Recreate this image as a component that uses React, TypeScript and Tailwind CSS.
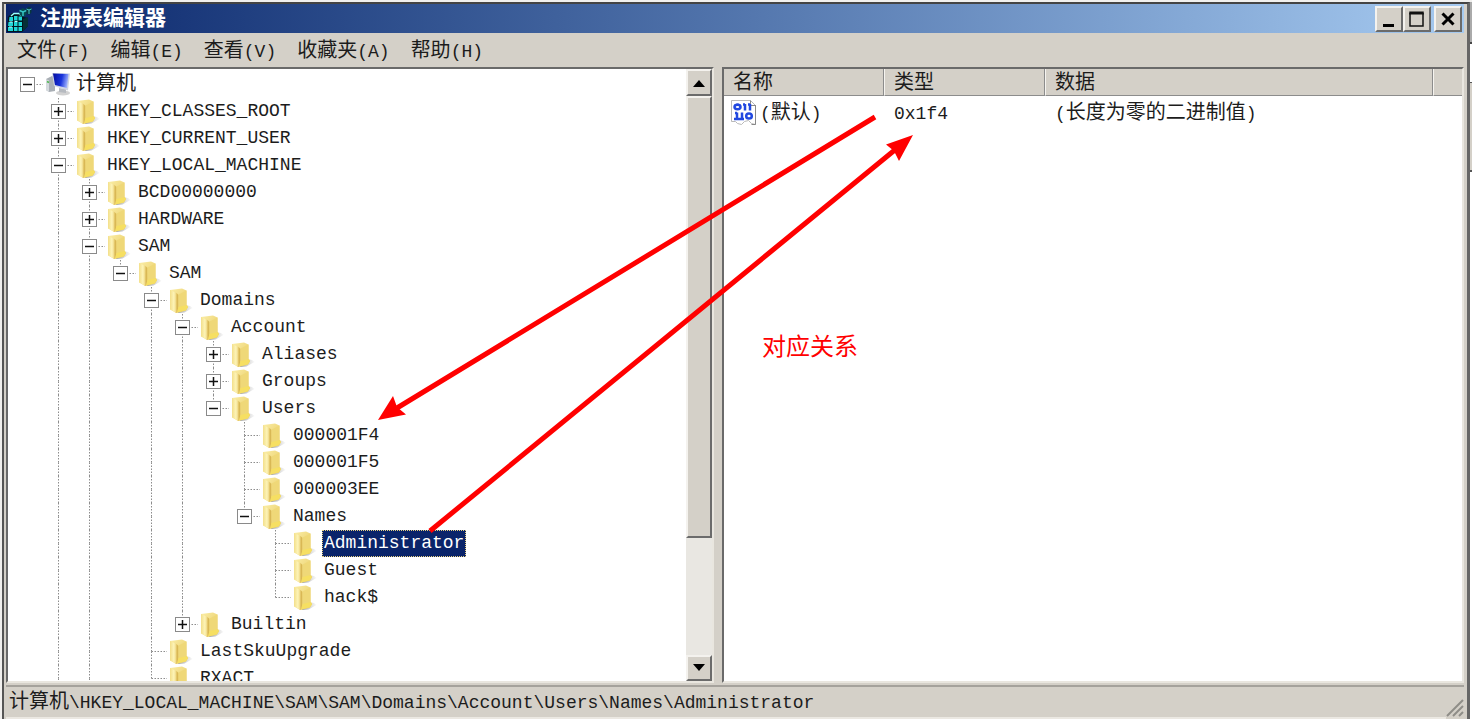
import { Fragment, useState } from "react";

/* `more` keeps the connector line running below the last loaded child. */
type Node = { id: string; label: string; closed?: boolean; more?: boolean; children?: Node[] };

const tree: Node = {
  id: "root",
  label: "计算机",
  children: [
    { id: "hkcr", label: "HKEY_CLASSES_ROOT", closed: true },
    { id: "hkcu", label: "HKEY_CURRENT_USER", closed: true },
    {
      id: "hklm",
      label: "HKEY_LOCAL_MACHINE",
      more: true,
      children: [
        { id: "bcd", label: "BCD00000000", closed: true },
        { id: "hardware", label: "HARDWARE", closed: true },
        {
          id: "sam",
          label: "SAM",
          more: true,
          children: [
            {
              id: "samsam",
              label: "SAM",
              children: [
                {
                  id: "domains",
                  label: "Domains",
                  children: [
                    {
                      id: "account",
                      label: "Account",
                      children: [
                        { id: "aliases", label: "Aliases", closed: true },
                        { id: "groups", label: "Groups", closed: true },
                        {
                          id: "users",
                          label: "Users",
                          children: [
                            { id: "1f4", label: "000001F4" },
                            { id: "1f5", label: "000001F5" },
                            { id: "3ee", label: "000003EE" },
                            {
                              id: "names",
                              label: "Names",
                              children: [
                                { id: "admin", label: "Administrator" },
                                { id: "guest", label: "Guest" },
                                { id: "hack", label: "hack$" },
                              ],
                            },
                          ],
                        },
                      ],
                    },
                    { id: "builtin", label: "Builtin", closed: true },
                  ],
                },
                { id: "lastsku", label: "LastSkuUpgrade" },
                { id: "rxact", label: "RXACT" },
              ],
            },
          ],
        },
      ],
    },
  ],
};

/* Chinese runs are set slightly larger than the monospaced Latin ones. */
function Mixed({ text }: { text: string }) {
  return (
    <>
      {text.split(/([\u4e00-\u9fff]+)/).map((part, i) =>
        i % 2 ? (
          <span key={i} className="text-[20px]">
            {part}
          </span>
        ) : (
          <Fragment key={i}>{part}</Fragment>
        ),
      )}
    </>
  );
}

function Guide({ up, down, across }: { up?: boolean; down?: boolean; across?: boolean }) {
  return (
    <svg viewBox="0 0 31 27" className="block h-[27px] w-[31px]" stroke="#8c8c8c" strokeDasharray="1.5 1.5" fill="none" aria-hidden="true">
      {up && <path d="M15.5 0V13.5" />}
      {down && <path d="M15.5 13.5V27" />}
      {across && <path d="M15.5 13.5H31" />}
    </svg>
  );
}

function FolderIcon() {
  return (
    <svg viewBox="0 0 24 26" className="h-[26px] w-6" aria-hidden="true">
      <defs>
        <linearGradient id="folderBack" x1="0" x2="1" y1="0" y2="1">
          <stop offset="0" stopColor="#fbeea6" />
          <stop offset="1" stopColor="#e6c65c" />
        </linearGradient>
        <linearGradient id="folderFront" x1="0" x2="1" y1="0" y2="0">
          <stop offset="0" stopColor="#f3df8a" />
          <stop offset="0.6" stopColor="#fdf4b8" />
          <stop offset="1" stopColor="#ecd27a" />
        </linearGradient>
        <linearGradient id="folderShade" x1="0" x2="1" y1="0" y2="0">
          <stop offset="0" stopColor="#888" stopOpacity="0.9" />
          <stop offset="1" stopColor="#bbb" stopOpacity="0.1" />
        </linearGradient>
      </defs>
      <path d="M16 17l5 1 2.500 2-8 4.500-7 .5z" fill="url(#folderShade)" />
      <path d="M1 2l12-1.500 4.500 2V17l1.500 2-2 3.500L7 25l-6-4z" fill="url(#folderBack)" />
      <path d="M1 2l6.500 3V25L1 21.500z" fill="url(#folderFront)" />
      <path d="M7.500 5L9.500 7v11L8.500 24l-1 1z" fill="#d9b855" />
      <path d="M9.500 6.500l8-4v15l-8 2z" fill="#efd878" />
      <path d="M9.500 19l8.500-2 1 2.500-2.500 3-8.500 2z" fill="#f6df62" />
    </svg>
  );
}

function ComputerIcon() {
  return (
    <svg viewBox="0 0 28 26" className="h-[26px] w-7" aria-hidden="true">
      <defs>
        <linearGradient id="screen" x1="0" x2="1" y1="0.300" y2="0.500">
          <stop offset="0" stopColor="#0611a4" />
          <stop offset="0.550" stopColor="#1a35dc" />
          <stop offset="1" stopColor="#a9bbff" />
        </linearGradient>
      </defs>
      <ellipse cx="18" cy="21" rx="7" ry="2.500" fill="#d2d2d2" />
      <path d="M1 7l6-3 3 2v13l-6 1-3-2z" fill="#a9afb5" />
      <path d="M1 7l3 1.500V20l-3-2z" fill="#d5dade" />
      <path d="M2 9.500l2 1" stroke="#4db84d" strokeWidth="1.500" />
      <path d="M14 16l7 1v4l-7-1z" fill="#b6bac0" />
      <path d="M7 1l18 .5-2 17L9 14z" fill="#cfd5e4" />
      <path d="M8 1.500l15.500.5-1.500 14L10 13z" fill="url(#screen)" />
    </svg>
  );
}

function RegeditIcon() {
  return (
    <svg viewBox="0 0 26 26" className="h-[26px] w-[26px]" aria-hidden="true">
      <path d="M2 11l4-4 8 0 3 4 5 1v8l-6 6H1z" fill="#02161f" />
      <path d="M3.500 11h3.500v4H3zM8 10h3.500v4.500H8zM12.500 10.500H16v4h-3.500zM2.500 16H7v4H2zM8 16h3.500v4H8zM12.500 16H16v4h-3.500zM2 21h5v4H2zM8 21h3.500v4H8zM12.500 21H16v4h-3.500z" fill="#1fd6d6" />
      <path d="M5 10l3-2.500h5l2 2" stroke="#9ff" strokeWidth="1.500" fill="none" />
      <path d="M3.500 16h3M8.500 15.500h3M3 21h3" stroke="#c4ffff" />
      <path d="M17 13l5-2v9l-5 5z" fill="#063036" />
      <path d="M13.500 4l3.500-2 3.500 2v5L17 11l-3.500-2z" fill="#07484e" />
      <path d="M13.500 4.500L17 6l3.500-1.500M17 6v4" stroke="#35c4c4" strokeWidth="1.500" fill="none" />
      <path d="M20.500 2.500l2.500-2 2.500 2v4L23 9l-2.500-2z" fill="#07383e" />
      <path d="M20.500 3l2.500 1 2.500-1M23 4v4" stroke="#4acaca" fill="none" />
    </svg>
  );
}

function BinaryIcon() {
  return (
    <svg viewBox="0 0 28 27" className="h-[27px] w-7 shrink-0" fill="none" aria-hidden="true">
      <path d="M1.500 1.500h19l5 5v19l-4-1-3-3-4 1-3 3-4-1-2-2H1.500z" fill="#fff" stroke="#b9b9b9" />
      <path d="M20.500 1.500v5h5M25.500 6v19.500h-4" stroke="#888" />
      <g stroke="#2148e0" strokeWidth="2.500">
        <ellipse cx="7.500" cy="8" rx="3" ry="2.200" />
        <path d="M7.500 4.500v2M15 5v6.500M20 5v6.500M13 5.500h2M18 5.500h2M7 13.500v6.500M12 13.500v6.500M5 14h2M4 20h10" />
        <ellipse cx="19" cy="17" rx="2.800" ry="2.600" />
      </g>
    </svg>
  );
}

type RowProps = { node: Node; trail: boolean[]; last: boolean; selected: string; onSelect: (id: string) => void };

function TreeRow({ node, trail, last, selected, onSelect }: RowProps) {
  const [open, setOpen] = useState(!node.closed);
  const root = node.id === "root";
  const expandable = node.closed || !!node.children;
  const active = selected === node.id;
  return (
    <li role="treeitem" aria-expanded={expandable ? open : undefined} aria-selected={active}>
      <div className="flex h-[27px] items-center whitespace-nowrap">
        {trail.map((line, i) => (
          <Guide key={i} up={line} down={line} />
        ))}
        <div className="relative">
          <Guide up={!root} down={!last} across />
          {expandable && (
            <button
              type="button"
              aria-label={`${open ? "折叠" : "展开"} ${node.label}`}
              onClick={() => setOpen(!open)}
              className="absolute inset-0 m-auto flex size-[15px] items-center justify-center border border-[#8a8a8a] bg-white"
            >
              <svg viewBox="0 0 11 11" className="size-[11px]" stroke="#111" strokeWidth="1.5" aria-hidden="true">
                <path d="M1 5.500H10" />
                {!open && <path d="M5.500 1V10" />}
              </svg>
            </button>
          )}
        </div>
        <div className="flex w-[31px] shrink-0 pl-0.5">{root ? <ComputerIcon /> : <FolderIcon />}</div>
        <button
          type="button"
          onClick={() => onSelect(node.id)}
          className={
            active
              ? "h-[27px] bg-[#0a246a] px-0.5 leading-[27px] text-white outline-1 -outline-offset-1 outline-dotted outline-[#e8d080]"
              : "h-[27px] px-0.5 leading-[27px]"
          }
        >
          <Mixed text={node.label} />
        </button>
      </div>
      {open && node.children && (
        <ul role="group">
          {node.children.map((child, i) => (
            <TreeRow
              key={child.id}
              node={child}
              trail={[...trail, !last]}
              last={i === node.children!.length - 1 && !child.more}
              selected={selected}
              onSelect={onSelect}
            />
          ))}
        </ul>
      )}
    </li>
  );
}

const raised = "flex items-center justify-center border-2 border-t-[#f4f2ee] border-l-[#f4f2ee] border-r-[#6b6b6b] border-b-[#6b6b6b] bg-[#d4d0c8]";
const sunken = "border-2 border-t-[#6a6a6a] border-l-[#6a6a6a] border-r-[#e9e6df] border-b-[#e9e6df] bg-white";

const menus = ["文件(F)", "编辑(E)", "查看(V)", "收藏夹(A)", "帮助(H)"];
const headings = ["名称", "类型", "数据", ""];

export default function App() {
  const [selected, setSelected] = useState("admin");
  return (
    <div className="relative flex h-screen overflow-hidden bg-[#f1f0ee] pt-0.5 pl-0.5 font-['Liberation_Mono','Noto_Sans_CJK_SC',monospace] text-[18px] text-[#1c1c1c]">
      <main className="flex min-w-0 flex-1 flex-col border-t-2 border-r-3 border-l-2 border-t-[#444] border-r-[#666] border-l-[#555] bg-[#d4d0c8] pr-[3px] pl-0.5">
        <header className="flex h-[29px] shrink-0 items-center bg-linear-to-r from-[#0a246a] to-[#a6caf0] pr-0.5">
          <RegeditIcon />
          <h1 className="ml-2 flex-1 pt-0.5 text-[21px] leading-7 font-bold text-white">注册表编辑器</h1>
          <div className="flex">
            <button type="button" aria-label="最小化" className={`${raised} h-[26px] w-7`}>
              <svg viewBox="0 0 20 20" className="size-5" aria-hidden="true">
                <path d="M4 16.500h11" stroke="#000" strokeWidth="3" />
              </svg>
            </button>
            <button type="button" aria-label="最大化" className={`${raised} h-[26px] w-7`}>
              <svg viewBox="0 0 20 20" className="size-5" fill="none" stroke="#111" aria-hidden="true">
                <path d="M3 4v13h13V4" strokeWidth="1.5" />
                <path d="M2.250 4h14.500" strokeWidth="3" />
              </svg>
            </button>
            <button type="button" aria-label="关闭" className={`${raised} ml-[3px] h-[26px] w-7`}>
              <svg viewBox="0 0 20 20" className="size-5" stroke="#000" strokeWidth="3" aria-hidden="true">
                <path d="M4.500 4.500l11 11M15.500 4.500l-11 11" />
              </svg>
            </button>
          </div>
        </header>

        <nav className="flex h-[34px] shrink-0 items-center gap-[21px] pt-1 pl-[11px]">
          {menus.map((m) => (
            <button key={m} type="button" className="leading-7">
              <Mixed text={m} />
            </button>
          ))}
        </nav>

        <div className="flex min-h-0 flex-1">
          <section className={`${sunken} flex w-[708px] shrink-0`} aria-label="注册表项">
            <ul role="tree" className="min-w-0 flex-1 overflow-hidden pt-0.5 pl-1">
              <TreeRow node={tree} trail={[]} last selected={selected} onSelect={setSelected} />
            </ul>
            <div className="flex w-[26px] shrink-0 flex-col bg-[#e9e7e2]">
              <button type="button" aria-label="向上滚动" className={`${raised} h-[27px]`}>
                <svg viewBox="0 0 14 8" className="h-2 w-3.5" aria-hidden="true">
                  <path d="M1 8l6-7 6 7z" />
                </svg>
              </button>
              <div className="flex-1">
                <div className={`${raised} h-[79%]`} />
              </div>
              <button type="button" aria-label="向下滚动" className={`${raised} h-[26px]`}>
                <svg viewBox="0 0 14 8" className="h-2 w-3.5" aria-hidden="true">
                  <path d="M1 0l6 7 6-7z" />
                </svg>
              </button>
            </div>
          </section>

          <section className={`${sunken} ml-2 min-w-0 flex-1`} aria-label="值">
            <table className="w-full table-fixed border-separate border-spacing-0 text-left">
              <colgroup>
                <col className="w-40" />
                <col className="w-[161px]" />
                <col className="w-[388px]" />
                <col />
              </colgroup>
              <thead>
                <tr className="h-[27px] bg-[#d4d0c8]">
                  {headings.map((h, i) => (
                    <th
                      key={i}
                      scope="col"
                      className="border-r border-b border-l border-r-[#8c8c8c] border-b-[#8c8c8c] border-l-[#f6f4f0] p-0 pt-1 pl-[9px] text-[20px] leading-[22px] font-normal last:border-r-0 first:border-l-0"
                    >
                      {h}
                    </th>
                  ))}
                </tr>
              </thead>
              <tbody>
                <tr className="h-8 whitespace-nowrap">
                  <td className="p-0 pl-1.5">
                    <div className="flex items-center">
                      <BinaryIcon />
                      <span className="pt-1 pl-0.5 leading-7">
                        <Mixed text="(默认)" />
                      </span>
                    </div>
                  </td>
                  <td className="p-0 pt-1 pl-2.5 leading-7">0x1f4</td>
                  <td className="p-0 pt-1 pl-2.5 leading-7">
                    <Mixed text="(长度为零的二进制值)" />
                  </td>
                  <td />
                </tr>
              </tbody>
            </table>
          </section>
        </div>

        <footer className="mt-0.5 flex h-[34px] shrink-0 items-start border-t-2 border-[#a5a29c]">
          <p className="min-w-0 flex-1 border-b-2 border-[#ebe8e2] pt-0.5 pl-[3px] leading-7 whitespace-nowrap">
            <Mixed text={"计算机\\HKEY_LOCAL_MACHINE\\SAM\\SAM\\Domains\\Account\\Users\\Names\\Administrator"} />
          </p>
          <svg viewBox="0 0 18 18" className="mt-3 size-[18px]" stroke="#8f8d88" strokeWidth="2" aria-hidden="true">
            <path d="M1 17L17 1M7 17L17 7M13 17l4-4" />
          </svg>
        </footer>
      </main>

      <aside className="flex w-0.5 shrink-0 flex-col bg-white" aria-hidden="true">
        <div className="h-10 bg-[#aaa]" />
        <div className="h-0.5 bg-[#444]" />
        <div className="h-[38px]" />
        <div className="h-[90px] border-t border-b-2 border-[#555] bg-[#d4d0c8]" />
      </aside>

      <svg viewBox="0 0 1472 719" className="pointer-events-none absolute top-0 left-0 h-[719px] w-[1472px]" fill="#f00" aria-hidden="true">
        <path d="M875 117L397 408M430 531L896 149" stroke="#f00" strokeWidth="5" />
        <path d="M378 420L393 396L397 407L406 414.500ZM913 135L886 144.500L894 151L899 161Z" />
      </svg>
      <p className="pointer-events-none absolute top-[327px] left-[762px] font-['Noto_Sans_CJK_SC',sans-serif] text-2xl leading-9 text-[#f00]">对应关系</p>
    </div>
  );
}
